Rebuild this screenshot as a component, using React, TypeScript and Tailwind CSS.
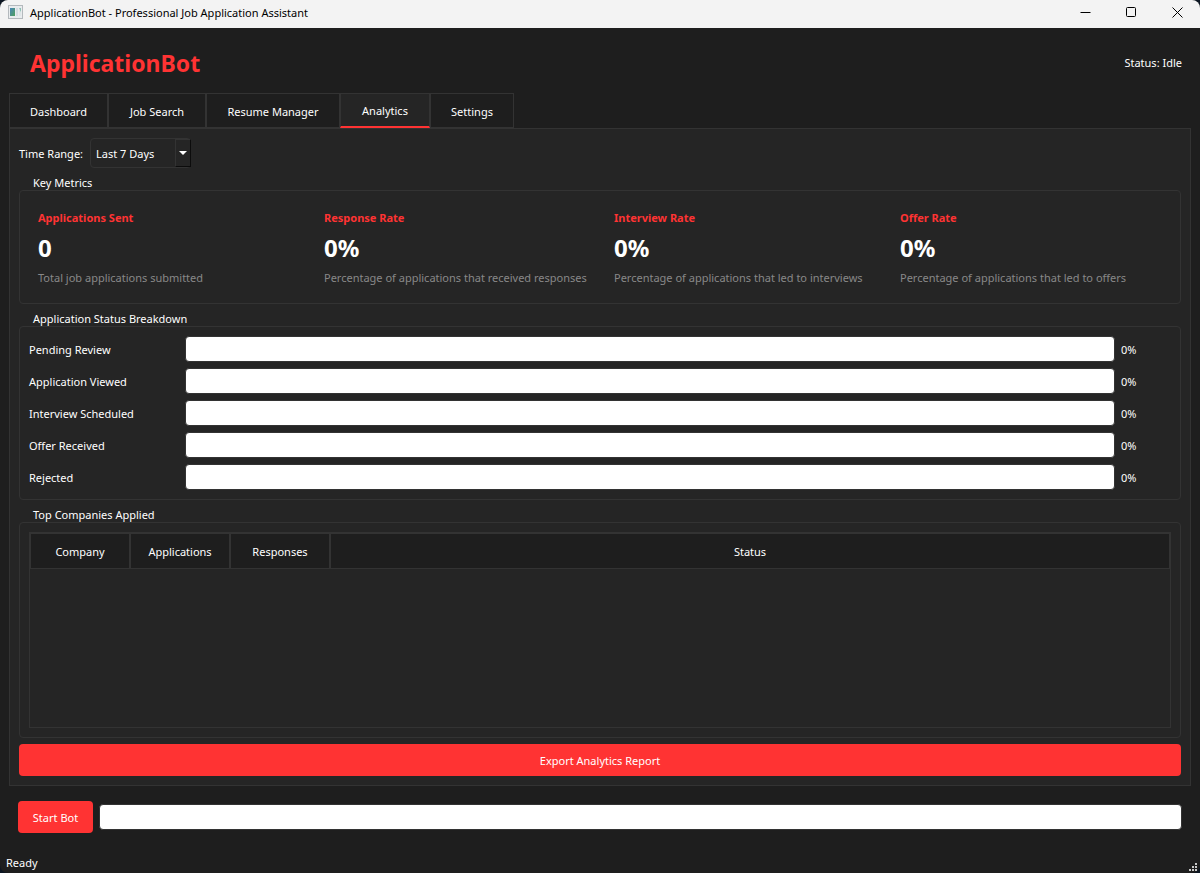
import type { ReactNode } from "react";

const TABS = [
  { name: "Dashboard", width: "w-[99px]" },
  { name: "Job Search", width: "w-[98px]" },
  { name: "Resume Manager", width: "w-[134px]" },
  { name: "Analytics", width: "w-[90px]" },
  { name: "Settings", width: "w-[84px]" },
];

const METRICS = [
  { title: "Applications Sent", value: "0", hint: "Total job applications submitted" },
  { title: "Response Rate", value: "0%", hint: "Percentage of applications that received responses" },
  { title: "Interview Rate", value: "0%", hint: "Percentage of applications that led to interviews" },
  { title: "Offer Rate", value: "0%", hint: "Percentage of applications that led to offers" },
];

const STATUSES = [
  { name: "Pending Review", percent: 0 },
  { name: "Application Viewed", percent: 0 },
  { name: "Interview Scheduled", percent: 0 },
  { name: "Offer Received", percent: 0 },
  { name: "Rejected", percent: 0 },
];

function ProgressBar({ label, percent }: { label: string; percent: number }) {
  return (
    <div
      role="progressbar"
      aria-label={label}
      aria-valuenow={percent}
      className="flex-1 h-[26px] rounded border border-[#333333] bg-white overflow-hidden"
    >
      <div className="h-full bg-[#ff3333]" style={{ width: `${percent}%` }} />
    </div>
  );
}

function GroupBox({ title, grow, children }: { title: string; grow?: boolean; children: ReactNode }) {
  return (
    <section className={grow ? "flex flex-col flex-1" : "flex flex-col"}>
      <h2 className="pl-3.5 h-4 leading-[18px]">{title}</h2>
      <div className="flex flex-col flex-1 rounded border border-[#333333] p-[9px]">{children}</div>
    </section>
  );
}

function TitleBar() {
  return (
    <header className="flex items-start h-7 bg-[#f3f3f3] text-black">
      <svg className="mt-[5px] ml-2 mr-[7px]" width="15" height="14" viewBox="0 0 15 14" aria-hidden="true">
        <defs>
          <linearGradient id="pane" x1="0" y1="0" x2="1" y2="1">
            <stop offset="0" stopColor="#4a86b8" />
            <stop offset="1" stopColor="#4fa05c" />
          </linearGradient>
        </defs>
        <rect x="0.5" y="0.5" width="14" height="13" fill="#e9ecee" stroke="#b4b9bd" />
        <rect x="2" y="3" width="5" height="8" fill="url(#pane)" />
        <rect x="8" y="3" width="2" height="8" fill="#d4dde2" />
        <path d="M11 3h2v5z" fill="#8fc0b4" />
        <path d="M11 3v8h2V8z" fill="#dfe6e8" />
      </svg>
      <h1 className="flex-1 leading-[26px]">ApplicationBot - Professional Job Application Assistant</h1>
      <button aria-label="Minimize" className="flex justify-center items-center w-[46px] h-[25px]">
        <svg width="11" height="11" viewBox="0 0 11 11" stroke="#000000" fill="none">
          <path d="M0.5 5.5h10" />
        </svg>
      </button>
      <button aria-label="Maximize" className="flex justify-center items-center w-[46px] h-[25px]">
        <svg width="11" height="11" viewBox="0 0 11 11" stroke="#000000" fill="none">
          <rect x="0.5" y="0.5" width="9" height="9" rx="1" />
        </svg>
      </button>
      <button aria-label="Close" className="flex justify-center items-center w-[46px] h-[25px]">
        <svg width="11" height="11" viewBox="0 0 11 11" stroke="#000000" fill="none">
          <path d="M0.5 0.5l10 10M10.5 0.5l-10 10" />
        </svg>
      </button>
    </header>
  );
}

function TimeRange() {
  return (
    <div className="flex items-center gap-1.5">
      <label htmlFor="range" className="w-[65px] pt-0.5 whitespace-nowrap">
        Time Range:
      </label>
      <div className="relative">
        <select
          id="range"
          className="block appearance-none w-[101px] h-[30px] pt-0.5 pl-[5px] rounded border border-[#333333] bg-[#252525] text-white"
        >
          <option>Last 7 Days</option>
          <option>Last 30 Days</option>
          <option>Last 90 Days</option>
        </select>
        <span className="absolute right-0 top-px flex justify-center items-center w-4 h-7 pointer-events-none border border-l-[#333333] border-t-[#333333] border-r-[#0c0c0c] border-b-[#0c0c0c] bg-[#252525]">
          <svg width="8" height="4" viewBox="0 0 8 4" fill="#ffffff">
            <path d="M0 0h8L4 4z" />
          </svg>
        </span>
      </div>
    </div>
  );
}

function CompaniesTable() {
  const th = "h-9 p-0 pt-0.5 font-normal bg-[#1e1e1e] border border-[#333333]";
  return (
    <div className="flex-1 min-h-[196px] border border-[#333333]">
      <table className="w-full table-fixed border-separate border-spacing-0">
        <thead>
          <tr>
            <th className={`${th} w-[100px]`}>Company</th>
            <th className={`${th} w-[100px]`}>Applications</th>
            <th className={`${th} w-[100px]`}>Responses</th>
            <th className={th}>Status</th>
          </tr>
        </thead>
        <tbody />
      </table>
    </div>
  );
}

export default function App() {
  return (
    <div className="min-h-screen flex bg-[#0c1622]">
      <div className="flex-1 flex flex-col rounded-lg overflow-hidden bg-[#1e1e1e] text-white text-[11px] leading-4 font-['Noto_Sans',sans-serif]">
        <TitleBar />

        <div className="flex justify-between items-center h-[65px] pl-[30px] pr-[18px] pb-1 pt-2">
          <p className="text-[23px] leading-8 font-bold text-[#ff3333]">ApplicationBot</p>
          <p>Status: Idle</p>
        </div>

        <nav role="tablist" className="flex px-[9px] h-[35px]">
          {TABS.map((tab) => (
            <button
              key={tab.name}
              role="tab"
              aria-selected={tab.name === "Analytics"}
              className={
                tab.name === "Analytics"
                  ? `${tab.width} pt-0.5 border border-b-2 border-[#333333] border-b-[#ff3333] bg-[#252525]`
                  : `${tab.width} pt-0.5 border border-[#333333]`
              }
            >
              {tab.name}
            </button>
          ))}
        </nav>

        <main className="flex-1 flex flex-col gap-1.5 mx-[9px] p-[9px] border border-[#333333] bg-[#252525]">
          <TimeRange />

          <GroupBox title="Key Metrics">
            <div className="grid grid-cols-[minmax(0,280fr)_minmax(0,284fr)_minmax(0,280fr)_minmax(0,280fr)] gap-1.5">
              {METRICS.map((m) => (
                <div key={m.title} className="flex flex-col gap-1.5 px-[9px] pt-2.5 pb-2 whitespace-nowrap">
                  <h3 className="font-bold text-[#ff3333]">{m.title}</h3>
                  <p className="text-2xl font-bold">{m.value}</p>
                  <p className="text-[#888888]">{m.hint}</p>
                </div>
              ))}
            </div>
          </GroupBox>

          <GroupBox title="Application Status Breakdown">
            <ul className="flex flex-col gap-1.5">
              {STATUSES.map((s) => (
                <li key={s.name} className="flex items-center gap-1.5">
                  <span className="w-[150px] pt-0.5">{s.name}</span>
                  <ProgressBar label={s.name} percent={s.percent} />
                  <span className="w-[50px] pt-0.5">{s.percent}%</span>
                </li>
              ))}
            </ul>
          </GroupBox>

          <GroupBox title="Top Companies Applied" grow>
            <CompaniesTable />
          </GroupBox>

          <button className="h-8 pt-0.5 rounded bg-[#ff3333]">Export Analytics Report</button>
        </main>

        <div className="flex items-center gap-1.5 px-[18px] pt-[15px]">
          <button className="h-8 w-[75px] pt-0.5 rounded bg-[#ff3333]">Start Bot</button>
          <ProgressBar label="Bot progress" percent={0} />
        </div>

        <footer className="flex justify-between items-end h-10 pl-1.5 pr-[3px] pb-[2px]">
          <span>Ready</span>
          <svg width="8" height="8" viewBox="0 0 8 8" fill="#c8c8c8" aria-hidden="true">
            <path d="M6 0h2v2H6zM3 3h2v2H3zM6 3h2v2H6zM0 6h2v2H0zM3 6h2v2H3zM6 6h2v2H6z" />
          </svg>
        </footer>
      </div>
    </div>
  );
}
